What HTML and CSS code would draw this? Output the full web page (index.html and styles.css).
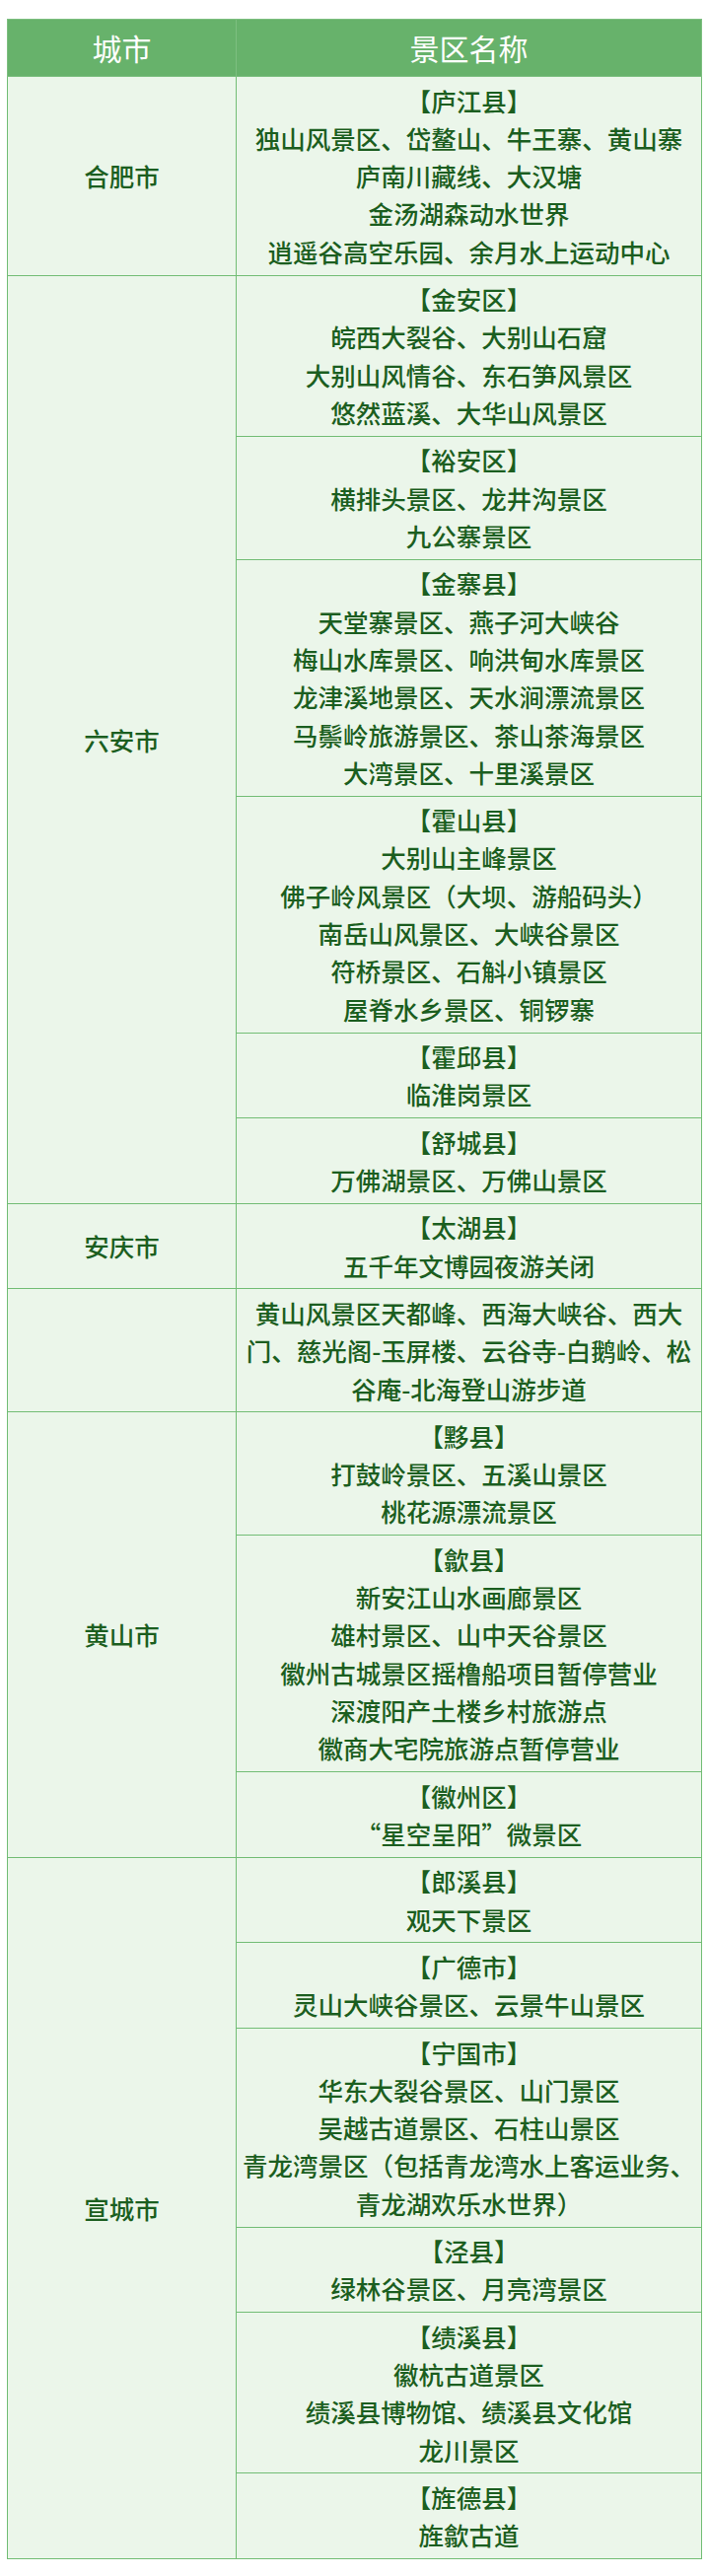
FILE: index.html
```html
<!DOCTYPE html>
<html lang="zh-CN">
<head>
<meta charset="utf-8">
<title>景区名称</title>
<link rel="stylesheet" href="styles.css">
</head>
<body>
<table class="spots">
  <colgroup><col class="col-city"><col class="col-name"></colgroup>
  <thead>
    <tr><th>城市</th><th>景区名称</th></tr>
  </thead>
  <tbody>
    <tr><td>合肥市</td><td>【庐江县】<br>独山风景区、岱鳌山、牛王寨、黄山寨<br>庐南川藏线、大汉塘<br>金汤湖森动水世界<br>逍遥谷高空乐园、余月水上运动中心</td></tr>
    <tr><td rowspan="6">六安市</td><td>【金安区】<br>皖西大裂谷、大别山石窟<br>大别山风情谷、东石笋风景区<br>悠然蓝溪、大华山风景区</td></tr>
    <tr><td>【裕安区】<br>横排头景区、龙井沟景区<br>九公寨景区</td></tr>
    <tr><td>【金寨县】<br>天堂寨景区、燕子河大峡谷<br>梅山水库景区、响洪甸水库景区<br>龙津溪地景区、天水涧漂流景区<br>马鬃岭旅游景区、茶山茶海景区<br>大湾景区、十里溪景区</td></tr>
    <tr><td>【霍山县】<br>大别山主峰景区<br>佛子岭风景区（大坝、游船码头）<br>南岳山风景区、大峡谷景区<br>符桥景区、石斛小镇景区<br>屋脊水乡景区、铜锣寨</td></tr>
    <tr><td>【霍邱县】<br>临淮岗景区</td></tr>
    <tr><td>【舒城县】<br>万佛湖景区、万佛山景区</td></tr>
    <tr><td>安庆市</td><td>【太湖县】<br>五千年文博园夜游关闭</td></tr>
    <tr><td></td><td>黄山风景区天都峰、西海大峡谷、西大门、慈光阁-玉屏楼、云谷寺-白鹅岭、松谷庵-北海登山游步道</td></tr>
    <tr><td rowspan="3">黄山市</td><td>【黟县】<br>打鼓岭景区、五溪山景区<br>桃花源漂流景区</td></tr>
    <tr><td>【歙县】<br>新安江山水画廊景区<br>雄村景区、山中天谷景区<br>徽州古城景区摇橹船项目暂停营业<br>深渡阳产土楼乡村旅游点<br>徽商大宅院旅游点暂停营业</td></tr>
    <tr><td>【徽州区】<br>“星空呈阳”微景区</td></tr>
    <tr><td rowspan="6">宣城市</td><td>【郎溪县】<br>观天下景区</td></tr>
    <tr><td>【广德市】<br>灵山大峡谷景区、云景牛山景区</td></tr>
    <tr><td>【宁国市】<br>华东大裂谷景区、山门景区<br>吴越古道景区、石柱山景区<br>青龙湾景区（包括青龙湾水上客运业务、青龙湖欢乐水世界）</td></tr>
    <tr><td>【泾县】<br>绿林谷景区、月亮湾景区</td></tr>
    <tr><td>【绩溪县】<br>徽杭古道景区<br>绩溪县博物馆、绩溪县文化馆<br>龙川景区</td></tr>
    <tr><td>【旌德县】<br>旌歙古道</td></tr>
  </tbody>
</table>
</body>
</html>
```

FILE: styles.css
```css
html, body {
  margin: 0;
  padding: 0;
  background: #ffffff;
}

body {
  padding: 19px 7px 19px 7px;
  font-family: "Noto Sans CJK SC", "Noto Sans", sans-serif;
}

.spots {
  width: 704px;
  table-layout: fixed;
  border-collapse: collapse;
  background: #ebf6ea;
  border: 1px solid #6cb870;
}

.col-city { width: 232px; }
.col-name { width: 472px; }

.spots th {
  background: #67b26b;
  color: #ffffff;
  font-weight: 400;
  font-size: 30px;
  line-height: 45px;
  padding: 6px 4px;
  border: 1px solid #7dbf80;
  text-align: center;
}

.spots td {
  color: #1b5e20;
  font-size: 25.5px;
  line-height: 38.32px;
  padding: 4.5px;
  border: 1px solid #72bd75;
  text-align: center;
  vertical-align: middle;
  font-weight: 500;
}
```
